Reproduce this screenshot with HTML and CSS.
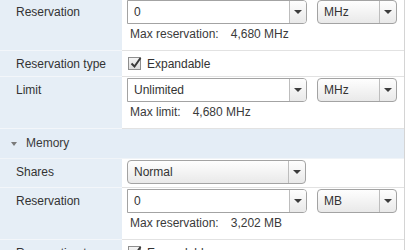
FILE: index.html
```html
<!DOCTYPE html>
<html lang="en">
<head>
  <meta charset="UTF-8">
  <meta name="viewport" content="width=device-width, initial-scale=1.0">
  <title>Resource allocation</title>
  <link rel="stylesheet" href="styles.css">
</head>
<body>
  <div class="panel">
    <div class="row">
      <div class="label">Reservation</div>
      <div class="value tall">
        <div class="controls">
          <div class="combo"><span class="field">0</span><span class="arrow"></span></div>
          <div class="select unit"><span class="field">MHz</span><span class="arrow"></span></div>
        </div>
        <div class="note">Max reservation:<span class="num">4,680 MHz</span></div>
      </div>
    </div>
    <div class="row">
      <div class="label">Reservation type</div>
      <div class="value check">
        <span class="box">
          <svg width="14" height="14" viewBox="0 0 14 14"><path d="M2.5 7.5 L5.5 10.5 L11.5 2" fill="none" stroke="#3a3a3a" stroke-width="2"/></svg>
        </span>
        <span>Expandable</span>
      </div>
    </div>
    <div class="row">
      <div class="label">Limit</div>
      <div class="value tall">
        <div class="controls">
          <div class="combo"><span class="field">Unlimited</span><span class="arrow"></span></div>
          <div class="select unit"><span class="field">MHz</span><span class="arrow"></span></div>
        </div>
        <div class="note">Max limit:<span class="num">4,680 MHz</span></div>
      </div>
    </div>
    <div class="section">
      <span class="caret"></span>Memory
    </div>
    <div class="row">
      <div class="label">Shares</div>
      <div class="value short">
        <div class="controls">
          <div class="select wide"><span class="field">Normal</span><span class="arrow"></span></div>
        </div>
      </div>
    </div>
    <div class="row">
      <div class="label">Reservation</div>
      <div class="value tall">
        <div class="controls">
          <div class="combo"><span class="field">0</span><span class="arrow"></span></div>
          <div class="select unit"><span class="field">MB</span><span class="arrow"></span></div>
        </div>
        <div class="note">Max reservation:<span class="num">3,202 MB</span></div>
      </div>
    </div>
    <div class="row">
      <div class="label">Reservation type</div>
      <div class="value check">
        <span class="box">
          <svg width="14" height="14" viewBox="0 0 14 14"><path d="M2.5 7.5 L5.5 10.5 L11.5 2" fill="none" stroke="#3a3a3a" stroke-width="2"/></svg>
        </span>
        <span>Expandable</span>
      </div>
    </div>
  </div>
</body>
</html>
```
FILE: styles.css
```css
body {
  margin: 0;
  background: #fff;
  font-family: "Liberation Sans", Arial, sans-serif;
  font-size: 12px;
  color: #333;
}
.panel {
  width: 404px;
  margin-top: -1px;
  border-right: 1px solid #d4d4d4;
}
.row {
  display: grid;
  grid-template-columns: 122px 1fr;
}
.label {
  background: #e6eef6;
  border-bottom: 1px solid #f3f6fa;
  padding: 1px 0 0 16px;
  line-height: 24px;
}
.value {
  border-bottom: 1px solid #e2e2e2;
  padding: 1px 0 0 5px;
}
.value.tall {
  padding-bottom: 6px;
}
.value.short {
  padding-bottom: 3px;
}
.value.check {
  display: flex;
  align-items: center;
  gap: 6px;
  padding: 6px 0 6px 6px;
  height: 13px;
}
.controls {
  display: flex;
  gap: 10px;
}
.combo, .select {
  display: flex;
  height: 22px;
  border: 1px solid #a3a3a3;
  line-height: 22px;
}
.combo {
  width: 178px;
  border-radius: 0 4px 4px 0;
  background: #fff;
}
.select {
  border-radius: 4px;
  background: linear-gradient(#fefefe, #e9e9e9);
}
.select.unit {
  width: 78px;
}
.select.wide {
  width: 177px;
}
.field {
  flex: 1;
  padding-left: 6px;
}
.arrow {
  width: 16px;
  border-left: 1px solid #bdbdbd;
  display: flex;
  align-items: center;
  justify-content: center;
}
.combo .arrow {
  border-radius: 0 3px 3px 0;
  background: linear-gradient(#fefefe, #e9e9e9);
}
.arrow::after {
  content: "";
  border-left: 4px solid transparent;
  border-right: 4px solid transparent;
  border-top: 4px solid #3c3c3c;
}
.note {
  padding-left: 3px;
  line-height: 20px;
  color: #3a3a3a;
}
.num {
  margin-left: 12px;
}
.box {
  position: relative;
  width: 11px;
  height: 11px;
  border: 1px solid #8e8e8e;
  background: linear-gradient(#f4f4f4, #dcdcdc);
}
.box svg {
  position: absolute;
  left: 0;
  top: -2px;
}
.section {
  background: #e4edf6;
  border-bottom: 1px solid #f0f4f8;
  height: 29px;
  line-height: 29px;
  padding-left: 11px;
  display: flex;
  align-items: center;
  color: #3a3a3a;
}
.caret {
  border-left: 3px solid transparent;
  border-right: 3px solid transparent;
  border-top: 4px solid #7a7a7a;
  margin-right: 9px;
}
```
